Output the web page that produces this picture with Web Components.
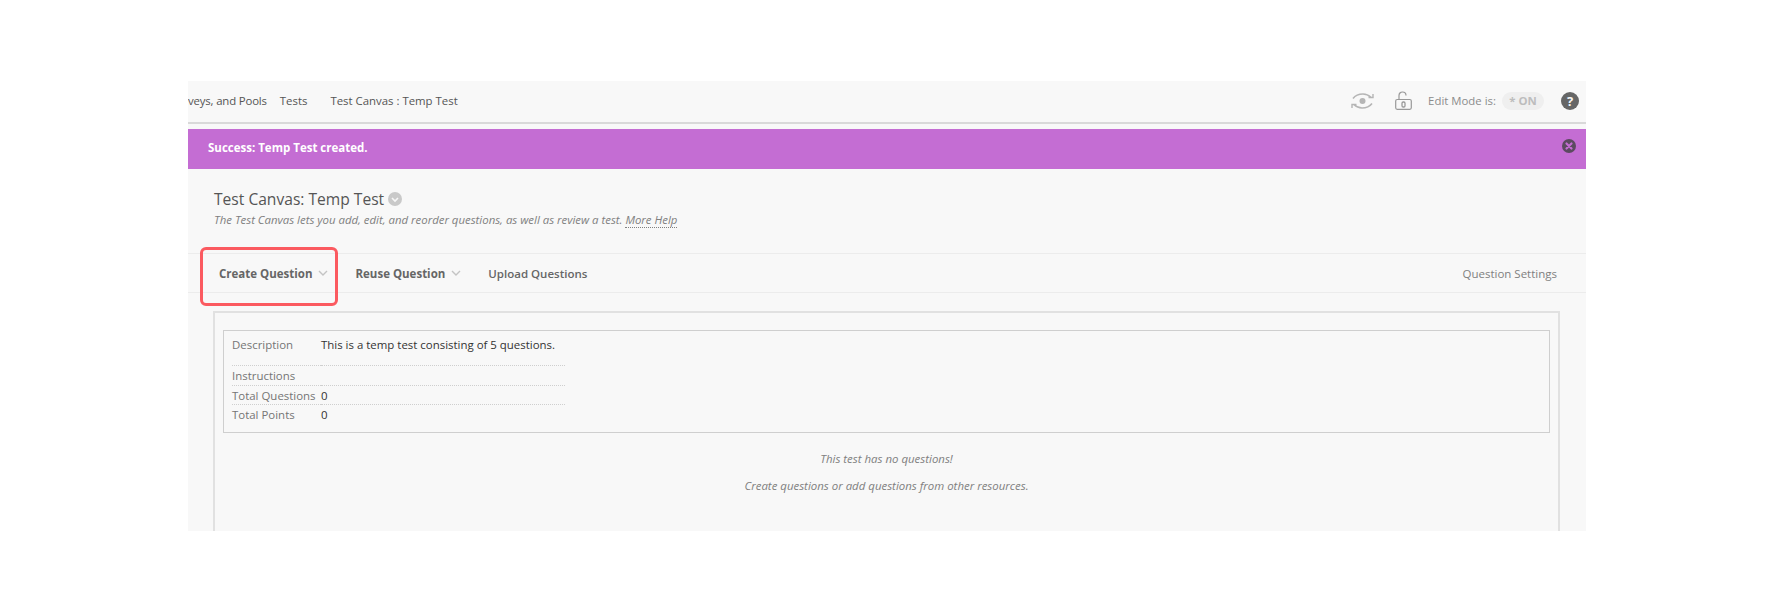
<!DOCTYPE html>
<html lang="en">
<head>
<meta charset="utf-8">
<title>Test Canvas</title>
<style>
    html, body { margin: 0; background: #fff; }
    body {
        font-family: 'Open Sans', 'Liberation Sans', sans-serif;
        padding: 81px 189px 82px 188px;
        height: 613px;
        box-sizing: border-box;
        overflow: hidden;
    }
</style>
</head>
<body>
<canvas-panel>
    <canvas-topbar></canvas-topbar>
    <success-banner>Success: Temp Test created.</success-banner>
    <page-header heading="Test Canvas: Temp Test">
        The Test Canvas lets you add, edit, and reorder questions, as well as review a test.
    </page-header>
    <action-toolbar></action-toolbar>
    <test-summary></test-summary>
</canvas-panel>

<script>
class CanvasPanel extends HTMLElement {
    constructor() {
        super();
        this.attachShadow({ mode: 'open' });
        this.shadowRoot.innerHTML = `
            <style>
                :host {
                    display: flex;
                    flex-direction: column;
                    height: 450px;
                    overflow: hidden;
                    background: #f8f8f8;
                    position: relative;
                }
            </style>
            <slot></slot>
        `;
    }
}

class CanvasTopbar extends HTMLElement {
    constructor() {
        super();
        this.attachShadow({ mode: 'open' });
        this.shadowRoot.innerHTML = `
            <style>
                :host {
                    display: flex;
                    flex: none;
                    align-items: center;
                    justify-content: space-between;
                    padding-bottom: 2px;
                    height: 39px;
                    border-bottom: 2px solid #d9d9d9;
                    font-size: 11.4px;
                    color: #555;
                    overflow: hidden;
                }
                .crumbs { display: flex; align-items: center; white-space: nowrap; }
                .first { letter-spacing: -0.16px; }
                .tests { margin-left: 13px; }
                .canvas { margin-left: 23px; }
                .tools { display: flex; align-items: center; padding-right: 7px; color: #8c8c8c; }
                .eye { margin-right: 21px; display: block; }
                .lock { margin-right: 16px; display: block; }
                .pill {
                    margin-left: 6px;
                    width: 42px;
                    height: 18px;
                    line-height: 18px;
                    border-radius: 9px;
                    background: #efefef;
                    color: #bdbdbd;
                    font-weight: 700;
                    text-align: center;
                }
                .help { margin-left: 17px; display: block; }
            </style>
            <div class="crumbs">
                <span class="first">veys, and Pools</span>
                <span class="tests">Tests</span>
                <span class="canvas">Test Canvas : Temp Test</span>
            </div>
            <div class="tools">
                <svg class="eye" width="23" height="16" viewBox="0 0 23 16" fill="none" stroke="#b5b5b5" stroke-width="1.600">
                    <path d="M2 5.500C5 1.500 9 1 12 1c3.500 0 6 1.500 8 3.500"/>
                    <path d="M21 10.500C18 14.500 14 15 11 15c-3.500 0-6-1.500-8-3.500"/>
                    <path d="M17.500 4.500h4.500V1M5.500 11.500H1V15" stroke-width="1.400"/>
                    <circle cx="11.500" cy="8" r="3" fill="#b5b5b5" stroke="none"/>
                </svg>
                <svg class="lock" width="17" height="19" viewBox="0 0 17 19" fill="none" stroke="#999" stroke-width="1.200">
                    <rect x="0.700" y="8.500" width="15.600" height="9.800" rx="1.500"/>
                    <path d="M4 8.500V4.500C4 2.500 5.500 1 7.500 1S11 2.500 11 4.500"/>
                    <rect x="7" y="11" width="3" height="5" rx="1.200" stroke-width="1.300"/>
                </svg>
                <span>Edit Mode is:</span>
                <span class="pill">* ON</span>
                <svg class="help" width="18" height="18" viewBox="0 0 18 18">
                    <circle cx="9" cy="9" r="9" fill="#666"/>
                    <text x="9" y="13.500" text-anchor="middle" font-size="13" font-weight="700" font-family="Open Sans, sans-serif" fill="#f7f7f7">?</text>
                </svg>
            </div>
        `;
    }
}

class SuccessBanner extends HTMLElement {
    constructor() {
        super();
        this.attachShadow({ mode: 'open' });
        this.shadowRoot.innerHTML = `
            <style>
                :host {
                    display: flex;
                    flex: none;
                    align-items: center;
                    justify-content: space-between;
                    height: 40px;
                    margin-top: 5px;
                    padding: 0 10px 3px 20px;
                    box-sizing: border-box;
                    background: #c46dd3;
                    color: #fff;
                    font-size: 11.5px;
                    font-weight: 700;
                }
                svg { display: block; margin-top: -4px; }
            </style>
            <span><slot></slot></span>
            <svg width="14" height="14" viewBox="0 0 14 14">
                <circle cx="7" cy="7" r="7" fill="#5c4a60"/>
                <path d="M4.500 4.500l5 5M9.500 4.500l-5 5" stroke="#c46dd3" stroke-width="2.200" stroke-linecap="round"/>
            </svg>
        `;
    }
}

class PageHeader extends HTMLElement {
    constructor() {
        super();
        this.attachShadow({ mode: 'open' });
        this.shadowRoot.innerHTML = `
            <style>
                :host {
                    display: block;
                    flex: none;
                    height: 84px;
                    padding: 19px 0 0 26px;
                    box-sizing: border-box;
                }
                .title { display: flex; align-items: center; font-size: 15.6px; line-height: 22px; color: #555; }
                svg { margin-left: 4px; display: block; }
                .desc { font-size: 11.4px; line-height: 18px; font-style: italic; color: #808080; margin-top: 1px; }
                a { color: #808080; border-bottom: 1px dotted #808080; }
            </style>
            <div class="title"><span id="heading"></span>
                <svg width="14" height="14" viewBox="0 0 14 14">
                    <circle cx="7" cy="7" r="7" fill="#c9c9c9"/>
                    <path d="M4 6l3 3 3-3" fill="none" stroke="#f7f7f7" stroke-width="1.600"/>
                </svg>
            </div>
            <div class="desc"><slot></slot> <a>More Help</a></div>
        `;
    }

    connectedCallback() {
        this.shadowRoot.getElementById('heading').textContent = this.getAttribute('heading');
    }
}

class ActionToolbar extends HTMLElement {
    constructor() {
        super();
        this.attachShadow({ mode: 'open' });
        this.shadowRoot.innerHTML = `
            <style>
                :host {
                    display: flex;
                    flex: none;
                    align-items: center;
                    height: 40px;
                    box-sizing: border-box;
                    border-top: 1px solid #ececec;
                    border-bottom: 1px solid #ececec;
                    font-size: 11.5px;
                    color: #666;
                    position: relative;
                }
                .item { font-weight: 700; display: flex; align-items: center; white-space: nowrap; }
                .create { margin-left: 31px; }
                .reuse { margin-left: 27px; }
                .upload { margin-left: 27px; font-weight: 600; }
                svg { margin-left: 6px; display: block; }
                .settings { margin-left: auto; margin-right: 29px; color: #808080; }
                .mark {
                    position: absolute;
                    left: 12px;
                    top: -7px;
                    width: 138px;
                    height: 59px;
                    box-sizing: border-box;
                    border: 3px solid #fb5a60;
                    border-radius: 6px;
                }
            </style>
            <span class="item create">Create Question
                <svg width="10" height="6" viewBox="0 0 10 6" fill="none" stroke="#c4c4c4" stroke-width="1.400"><path d="M1 1l4 4 4-4"/></svg>
            </span>
            <span class="item reuse">Reuse Question
                <svg width="10" height="6" viewBox="0 0 10 6" fill="none" stroke="#c4c4c4" stroke-width="1.400"><path d="M1 1l4 4 4-4"/></svg>
            </span>
            <span class="item upload">Upload Questions</span>
            <span class="settings">Question Settings</span>
            <div class="mark"></div>
        `;
    }
}

class TestSummary extends HTMLElement {
    constructor() {
        super();
        this.attachShadow({ mode: 'open' });
        this.shadowRoot.innerHTML = `
            <style>
                :host {
                    display: block;
                    flex: none;
                    height: 300px;
                    margin: 18px 26px 0 25px;
                    padding: 17px 8px 0;
                    border: 2px solid #e1e1e1;
                    border-bottom: none;
                    box-sizing: border-box;
                    font-size: 11.45px;
                }
                .info {
                    height: 103px;
                    box-sizing: border-box;
                    border: 1px solid #cfcfcf;
                    padding: 2px 8px 0;
                }
                dl {
                    display: grid;
                    grid-template-columns: 89px 1fr;
                    width: 333px;
                    margin: 0;
                    color: #333;
                }
                dt, dd {
                    margin: 0;
                    height: 19.500px;
                    line-height: 19px;
                    white-space: nowrap;
                    border-bottom: 1px dotted #cfcfcf;
                    box-sizing: border-box;
                }
                dt { color: #757575; }
                .tall { height: 33px; line-height: 18px; padding-top: 3px; }
                .last { border-bottom: none; }
                .empty { text-align: center; font-style: italic; color: #808080; margin: 17px 0 0; line-height: 18px; }
                .empty + .empty { margin-top: 9px; }
            </style>
            <div class="info">
                <dl>
                    <dt class="tall">Description</dt><dd class="tall">This is a temp test consisting of 5 questions.</dd>
                    <dt>Instructions</dt><dd></dd>
                    <dt>Total Questions</dt><dd>0</dd>
                    <dt class="last">Total Points</dt><dd class="last">0</dd>
                </dl>
            </div>
            <p class="empty">This test has no questions!</p>
            <p class="empty">Create questions or add questions from other resources.</p>
        `;
    }
}

customElements.define('canvas-panel', CanvasPanel);
customElements.define('canvas-topbar', CanvasTopbar);
customElements.define('success-banner', SuccessBanner);
customElements.define('page-header', PageHeader);
customElements.define('action-toolbar', ActionToolbar);
customElements.define('test-summary', TestSummary);
</script>
</body>
</html>
